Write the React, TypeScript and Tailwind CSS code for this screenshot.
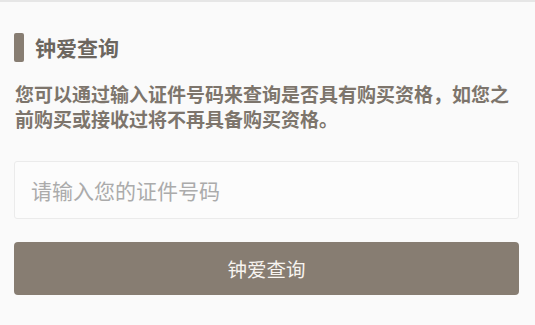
import React from 'react';

export default function App() {
  return (
    <div
      className="w-full h-[325px] bg-[#fafafa] border-t-2 border-[#e6e6e6] pl-[14px] pr-[16px]"
      style={{ fontFamily: '"Noto Sans CJK SC", "Noto Sans", sans-serif' }}
    >
      <div className="mt-[31px] flex items-center h-[29px]">
        <span className="w-[10px] h-[29px] rounded-[2px] bg-[#877d72]" />
        <h1 className="ml-[11px] text-[21px] leading-[29px] font-bold text-[#6c665f]">钟爱查询</h1>
      </div>

      <p className="mt-[19px] pl-px text-[19px] leading-[25px] font-bold text-[#7d756c]">
        您可以通过输入证件号码来查询是否具有购买资格，如您之前购买或接收过将不再具备购买资格。
      </p>

      <input
        type="text"
        placeholder="请输入您的证件号码"
        className="mt-[30px] block w-full h-[58px] px-4 rounded-[3px] border border-[#ebebeb] bg-[#fcfcfc] text-[21px] text-[#555] placeholder:text-[#ababab] outline-none"
      />

      <button
        type="button"
        className="mt-[23px] w-full h-[53px] rounded-[4px] bg-[#877d72] text-[19.5px] text-[#f7f4f0]"
      >
        钟爱查询
      </button>
    </div>
  );
}
